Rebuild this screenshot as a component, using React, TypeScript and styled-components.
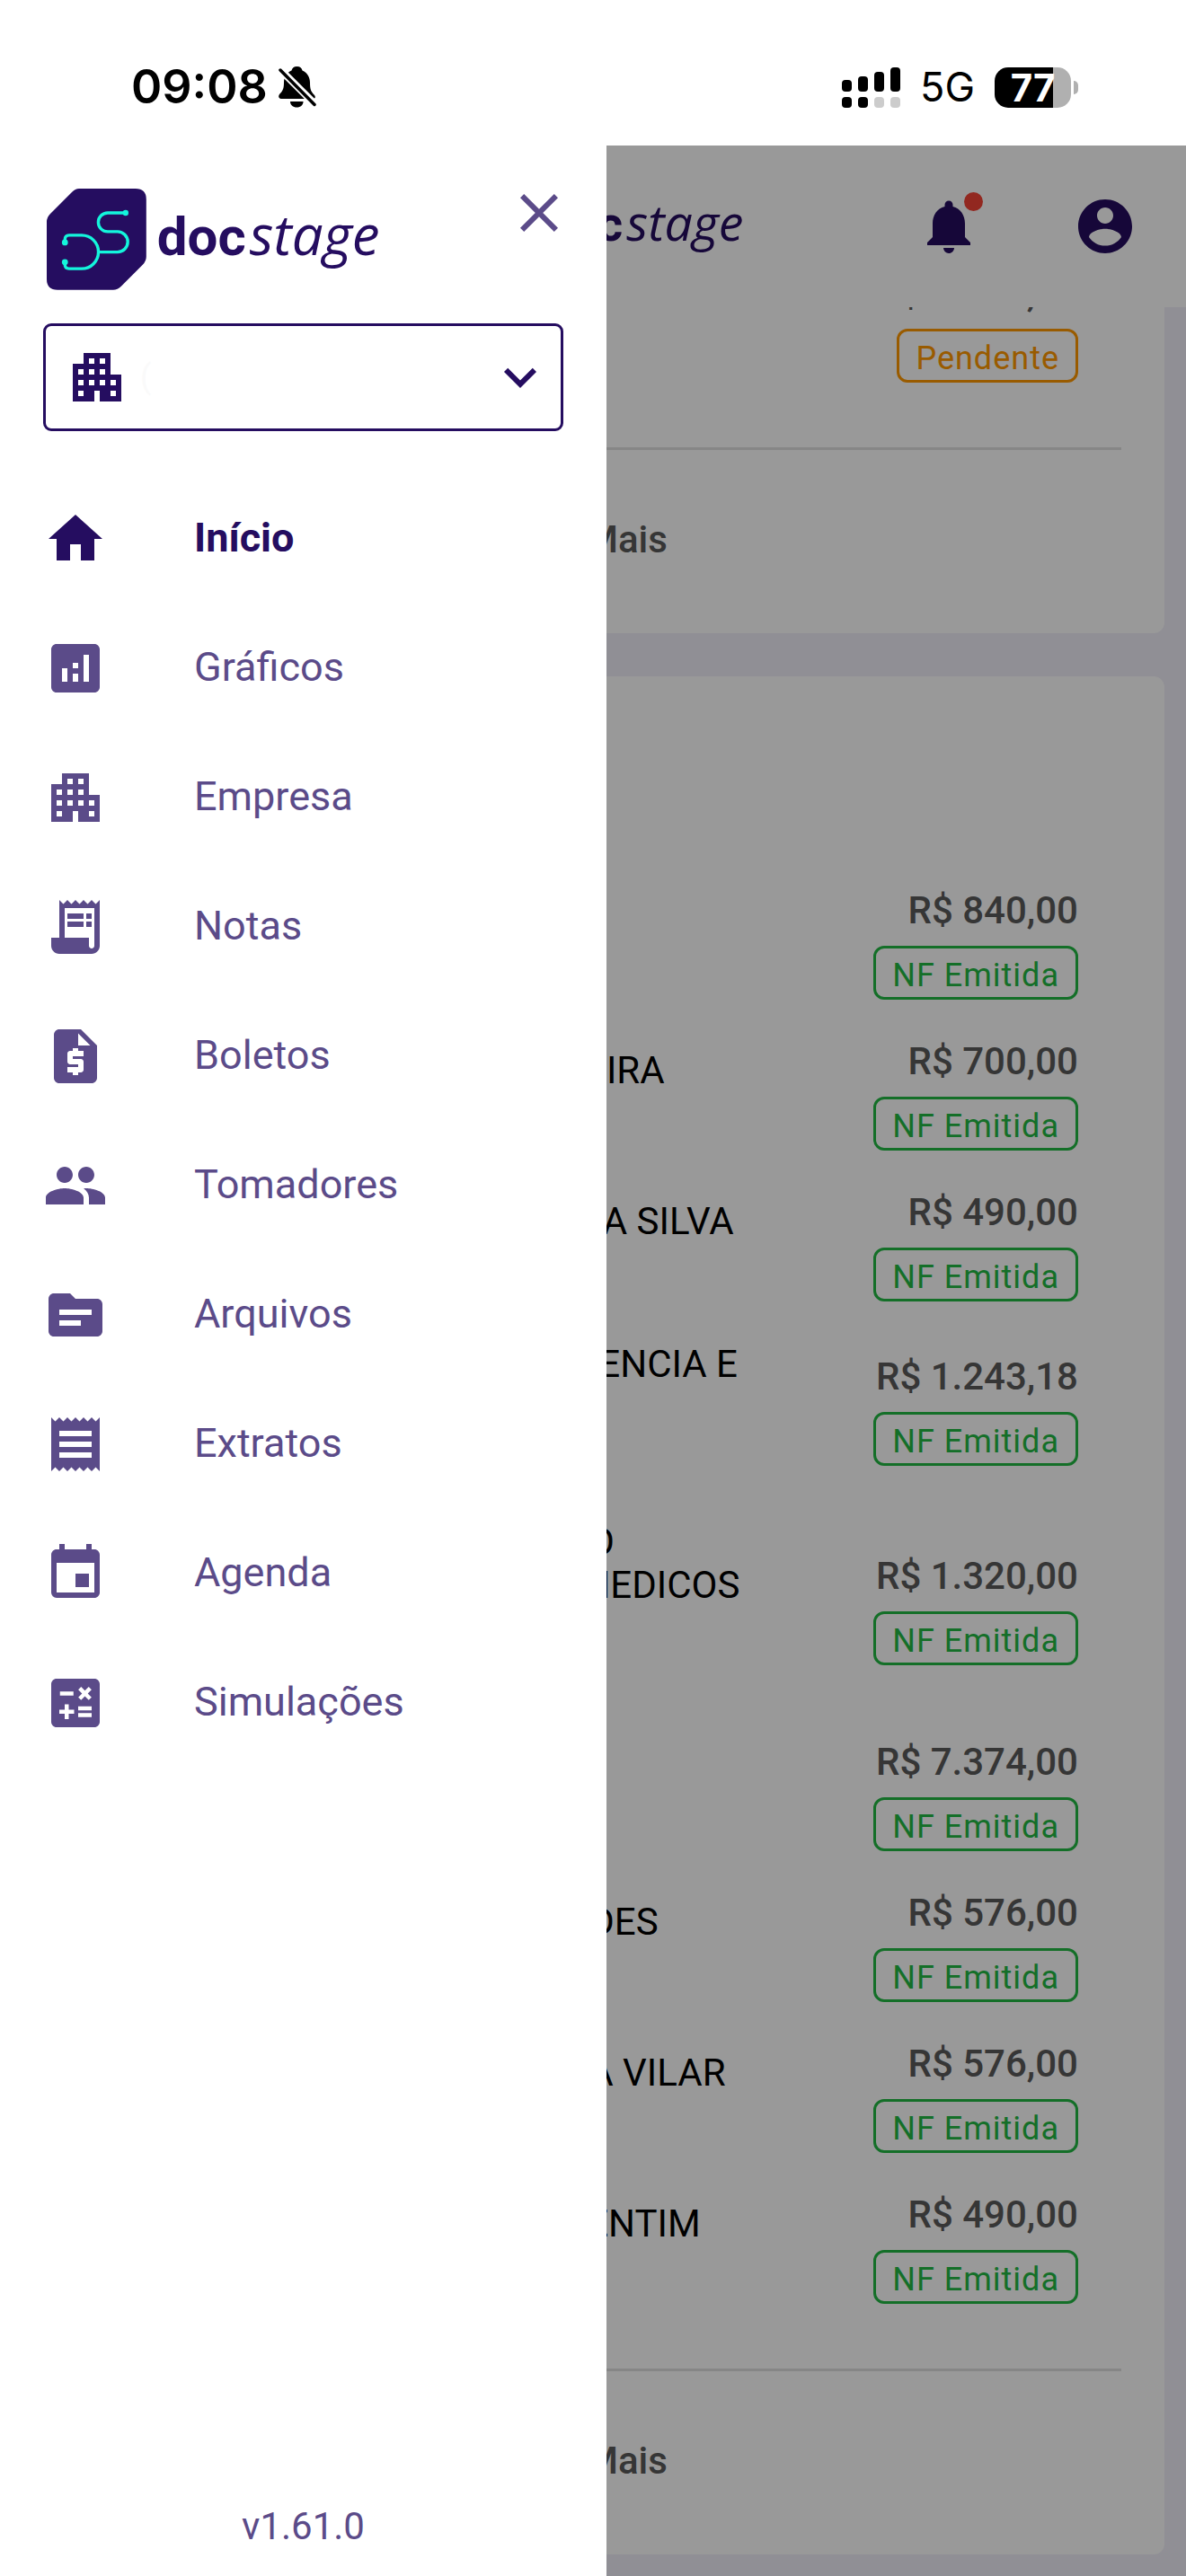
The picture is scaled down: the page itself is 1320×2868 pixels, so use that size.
import * as React from 'react';
import styled, { createGlobalStyle } from 'styled-components';
import type { IconType } from 'react-icons';
import {
    MdAnalytics,
    MdApartment,
    MdCalculate,
    MdClose,
    MdEvent,
    MdExpandMore,
    MdHome,
    MdNotifications,
    MdPeople,
    MdReceipt,
    MdReceiptLong,
    MdRequestQuote,
    MdTopic,
} from 'react-icons/md';

type Status = 'issued' | 'pending';

interface Invoice {
    date: string;
    number: string;
    name: string[];
    price: string;
    status: Status;
}

interface MenuEntry {
    label: string;
    icon: IconType;
    active?: boolean;
}

const colors = {
    primary: '#250d60',
    muted: '#5b4b89',
    text: '#5b5b5b',
    issued: '#22b944',
    pending: '#ff9800',
    divider: '#dfdfdf',
    page: '#f0eef8',
    alert: '#f44336',
};

const statusLabel: Record<Status, string> = {
    issued: 'NF Emitida',
    pending: 'Pendente',
};

const pendingInvoices: Invoice[] = [
    { date: '12/05', number: 'NF 110', name: ['PAULA'], price: 'R$ 1.380,17', status: 'pending' },
];

const invoices: Invoice[] = [
    { date: '10/05', number: 'NF 109', name: ['CARLA'], price: 'R$ 840,00', status: 'issued' },
    { date: '10/05', number: 'NF 108', name: ['LIA FERREIRA'], price: 'R$ 700,00', status: 'issued' },
    { date: '09/05', number: 'NF 107', name: ['CAMILA DA SILVA'], price: 'R$ 490,00', status: 'issued' },
    { date: '09/05', number: 'NF 106', name: ['GRUPO CIENCIA E', 'SAUDE'], price: 'R$ 1.243,18', status: 'issued' },
    { date: '08/05', number: 'NF 105', name: ['GRUPO DO', 'EIXO DE MEDICOS', 'LTDA'], price: 'R$ 1.320,00', status: 'issued' },
    { date: '08/05', number: 'NF 104', name: ['CLINICA'], price: 'R$ 7.374,00', status: 'issued' },
    { date: '07/05', number: 'NF 103', name: ['LEO MENDES'], price: 'R$ 576,00', status: 'issued' },
    { date: '07/05', number: 'NF 102', name: ['ANA ROSA VILAR'], price: 'R$ 576,00', status: 'issued' },
    { date: '06/05', number: 'NF 101', name: ['RITA VALENTIM'], price: 'R$ 490,00', status: 'issued' },
];

const menu: MenuEntry[] = [
    { label: 'Início', icon: MdHome, active: true },
    { label: 'Gráficos', icon: MdAnalytics },
    { label: 'Empresa', icon: MdApartment },
    { label: 'Notas', icon: MdReceiptLong },
    { label: 'Boletos', icon: MdRequestQuote },
    { label: 'Tomadores', icon: MdPeople },
    { label: 'Arquivos', icon: MdTopic },
    { label: 'Extratos', icon: MdReceipt },
    { label: 'Agenda', icon: MdEvent },
    { label: 'Simulações', icon: MdCalculate },
];

const GlobalStyle = createGlobalStyle`
    * {
        box-sizing: border-box;
    }

    body {
        margin: 0;
        background-color: white;
        font-family: Roboto, sans-serif;
    }
`;

const Screen = styled.div`
    display: flex;
    flex-direction: column;
    min-height: 100vh;
`;

const StatusBar = styled.div`
    display: flex;
    align-items: center;
    justify-content: space-between;
    height: 162px;
    padding: 32px 120px 0 146px;
    color: black;
    font-family: Inter, sans-serif;
`;

const StatusGroup = styled.div`
    display: flex;
    align-items: center;
    gap: ${({ $gap }: { $gap: number }) => $gap}px;
`;

const Clock = styled.span`
    font-size: 52px;
    font-weight: 600;
    line-height: 60px;
`;

const Network = styled.span`
    font-size: 45px;
    font-weight: 400;
    line-height: 60px;
`;

const Battery = styled.div`
    display: flex;
    align-items: center;
    gap: 3px;

    &::after {
        content: '';
        width: 5px;
        height: 15px;
        border-radius: 0 8px 8px 0;
        background-color: #b0b0b0;
    }
`;

const BatteryLevel = styled.span`
    width: 85px;
    height: 45px;
    border-radius: 15px;
    background: linear-gradient(to right, black 77%, #b0b0b0 77%);
    color: white;
    font-size: 42px;
    font-weight: 700;
    line-height: 45px;
    text-align: center;
`;

const Body = styled.div`
    position: relative;
    flex: 1;
    overflow: hidden;
`;

const Page = styled.div`
    min-height: 100%;
    background-color: ${colors.page};
`;

const AppBar = styled.header`
    position: relative;
    z-index: 1;
    display: grid;
    grid-template-columns: 1fr auto 1fr;
    align-items: center;
    height: 180px;
    padding: 0 54px;
    background-color: white;
`;

const Actions = styled.div`
    grid-column: 3;
    display: flex;
    justify-content: flex-end;
    gap: 102px;
`;

const IconButton = styled.button`
    position: relative;
    display: flex;
    padding: 0;
    border: none;
    background-color: transparent;
    color: ${({ $muted }: { $muted?: boolean }) => ($muted ? colors.muted : colors.primary)};
    font-size: 72px;
    cursor: pointer;
`;

const AlertDot = styled.span`
    position: absolute;
    top: -2px;
    right: -2px;
    width: 21px;
    height: 21px;
    border-radius: 50%;
    background-color: ${colors.alert};
`;

const Brand = styled.div`
    grid-column: 2;
    display: flex;
    align-items: center;
    gap: 12px;
    color: ${colors.primary};
    font-size: ${({ $size }: { $size: number }) => $size}px;
    line-height: 1;

    svg {
        height: 1.88em;
    }
`;

const BrandText = styled.div`
    display: flex;
    align-items: baseline;
    gap: 4px;
    padding-bottom: 8px;
`;

const BrandDoc = styled.strong`
    font-weight: 700;
`;

const BrandStage = styled.em`
    font-family: 'Open Sans', sans-serif;
    font-size: 1.03em;
    font-weight: 400;
`;

// The list is scrolled a little way under the app bar.
const Feed = styled.main`
    display: flex;
    flex-direction: column;
    gap: 48px;
    margin-top: -108px;
    padding: 0 24px 24px;
`;

const Card = styled.section`
    padding: 48px 48px 0;
    border-radius: 12px;
    background-color: white;
`;

const CardTitle = styled.h2`
    height: 168px;
    margin: 0;
    color: ${colors.text};
    font-size: 48px;
    font-weight: 500;
    line-height: 60px;
`;

const List = styled.ul`
    margin: 0;
    padding: 0 0 48px;
    border-bottom: 3px solid ${colors.divider};
    list-style: none;
`;

const Row = styled.li`
    display: grid;
    grid-template-columns: 1fr 400px 368px;
    align-items: center;
    min-height: 168px;
    color: black;
    font-size: 42px;
    line-height: 48px;
`;

const Customer = styled.div`
    display: flex;
    flex-direction: column;
    gap: 6px;
    padding: 22px 0 26px;
    white-space: nowrap;
`;

const Name = styled.span`
    display: block;
`;

const Amount = styled.div`
    display: flex;
    flex-direction: column;
    align-items: flex-end;
    gap: 18px;
    padding-right: 48px;
    color: ${colors.text};
    font-weight: 500;
    line-height: 42px;
`;

const Chip = styled.span`
    height: 60px;
    padding: 0 18px;
    border: 3px solid;
    border-radius: 12px;
    color: ${({ $status }: { $status: Status }) => colors[$status]};
    font-size: 36px;
    font-weight: 400;
    letter-spacing: 1px;
    line-height: 60px;
`;

const MoreButton = styled.button`
    display: block;
    width: 100%;
    height: 204px;
    padding: 0 0 6px;
    border: none;
    background-color: transparent;
    color: ${colors.text};
    font-family: inherit;
    font-size: 42px;
    font-weight: 500;
    cursor: pointer;
`;

const Scrim = styled.div`
    position: absolute;
    inset: 0;
    z-index: 2;
    background-color: rgba(0, 0, 0, 0.4);
`;

const Drawer = styled.aside`
    position: absolute;
    inset: 0 auto 0 0;
    z-index: 3;
    display: flex;
    flex-direction: column;
    width: 675px;
    max-width: 90%;
    padding: 39px 48px 22px;
    background-color: white;
`;

const DrawerHeader = styled.div`
    display: flex;
    align-items: flex-start;
    justify-content: space-between;
    height: 159px;
    padding: 9px 0 0 4px;
    margin-right: -9px;

    ${IconButton} {
        margin-top: -9px;
    }
`;

const CompanyPicker = styled.label`
    display: flex;
    align-items: center;
    height: 120px;
    padding: 0 9px 0 21px;
    border: 3px solid ${colors.primary};
    border-radius: 9px;
    color: ${colors.primary};
    font-size: 72px;
`;

const CompanySelect = styled.select`
    flex: 1;
    min-width: 0;
    height: 100%;
    padding: 0 12px;
    border: none;
    outline: 0;
    appearance: none;
    background-color: transparent;
    color: #fafafa;
    font-family: inherit;
    font-size: 36px;
`;

const Menu = styled.nav`
    display: flex;
    flex-direction: column;
    padding-top: 48px;
`;

const MenuLink = styled.a`
    display: flex;
    align-items: center;
    gap: 96px;
    height: 144px;
    color: ${({ $active }: { $active?: boolean }) => ($active ? colors.primary : colors.muted)};
    font-size: 45px;
    font-weight: ${({ $active }) => ($active ? 700 : 400)};
    text-decoration: none;

    svg {
        font-size: 72px;
    }
`;

const MenuLabel = styled.span`
    padding-bottom: 3px;
`;

const Version = styled.footer`
    margin-top: auto;
    color: ${colors.muted};
    font-size: 42px;
    line-height: 66px;
    text-align: center;
`;

function MutedIcon() {
    return (
        <svg width={42} height={46} viewBox="0 0 42 46">
            <path d="M20.5 0C24 0 26 2 26.5 4.5C32 7 35 12 35 18C35 25 36 28 40 32C41.5 34 41 36 38 36H3C0 36 -0.5 33 1 31C5 27 6 24 6 18C6 12 9 7 14.5 4.5C15 2 17 0 20.5 0Z" />
            <path d="M13 39h14.5c0 4-3 6.5-7.2 6.5s-7.3-2.5-7.3-6.5z" />
            <path d="M-3 -1.5L43 44.5" stroke="white" strokeWidth={8} />
            <path d="M2 4L40 42.5" stroke="black" strokeWidth={3.5} strokeLinecap="round" />
        </svg>
    );
}

function SignalIcon() {
    return (
        <svg width={65} height={45} viewBox="0 0 65 45">
            <rect x="0" y="14" width="11" height="13" rx="4" />
            <rect x="18" y="10" width="11" height="17" rx="4" />
            <rect x="36" y="5" width="11" height="22" rx="4" />
            <rect x="54" y="0" width="11" height="27" rx="4" />
            <rect x="0" y="33" width="11" height="12" rx="4" />
            <rect x="18" y="33" width="11" height="12" rx="4" />
            <rect x="36" y="33" width="11" height="12" rx="4" fill="#ccc" />
            <rect x="54" y="33" width="11" height="12" rx="4" fill="#ccc" />
        </svg>
    );
}

function AccountIcon() {
    return (
        <svg width="1em" height="1em" viewBox="0 0 24 24" fill="currentColor">
            <path d="M12 2C6.48 2 2 6.48 2 12s4.48 10 10 10 10-4.48 10-10S17.52 2 12 2zm0 3c1.66 0 3 1.34 3 3s-1.34 3-3 3-3-1.34-3-3 1.34-3 3-3zm0 14.2c-2.5 0-4.71-1.28-6-3.22.03-1.99 4-3.08 6-3.08 1.99 0 5.97 1.09 6 3.08-1.29 1.94-3.5 3.22-6 3.22z" />
        </svg>
    );
}

function BrandMark() {
    return (
        <svg viewBox="0 0 111 113">
            <path
                fill={colors.primary}
                d="M36 0H99Q111 0 111 12V76Q111 81 107 85L83 109Q79 113 74 113H12Q0 113 0 101V37Q0 32 4 28L28 4Q32 0 36 0Z"
            />
            <g fill="none" stroke="#14f5dc" strokeWidth={3.4}>
                <path d="M88 27H68a10.5 10.5 0 0 0 0 21H79a11.3 11.3 0 0 1 0 22.7H58" />
                <path d="M20.3 60V57Q20.3 52 25 52H39a18.6 18.6 0 0 1 0 37.3H25Q20.3 89.3 20.3 85V82" />
            </g>
            <g fill="#14f5dc">
                <circle cx="88" cy="27" r="3.2" />
                <circle cx="20.3" cy="60" r="3.4" />
                <circle cx="20.3" cy="82" r="3.4" />
            </g>
        </svg>
    );
}

function Logo({ size }: { size: number }) {
    return (
        <Brand $size={size}>
            <BrandMark />
            <BrandText>
                <BrandDoc>doc</BrandDoc>
                <BrandStage>stage</BrandStage>
            </BrandText>
        </Brand>
    );
}

function InvoiceList({ items }: { items: Invoice[] }) {
    return (
        <List>
            {items.map(item => (
                <Row key={item.number}>
                    <span>{item.date}</span>
                    <Customer>
                        <div>
                            {item.name.map(line => (
                                <Name key={line}>{line}</Name>
                            ))}
                        </div>
                        <span>{item.number}</span>
                    </Customer>
                    <Amount>
                        {item.price}
                        <Chip $status={item.status}>{statusLabel[item.status]}</Chip>
                    </Amount>
                </Row>
            ))}
        </List>
    );
}

const App: React.FC = () => {
    return (
        <Screen>
            <GlobalStyle />
            <StatusBar>
                <StatusGroup $gap={12}>
                    <Clock>09:08</Clock>
                    <MutedIcon />
                </StatusGroup>
                <StatusGroup $gap={22}>
                    <SignalIcon />
                    <Network>5G</Network>
                    <Battery>
                        <BatteryLevel>77</BatteryLevel>
                    </Battery>
                </StatusGroup>
            </StatusBar>
            <Body>
                <Page>
                    <AppBar>
                        <Logo size={54} />
                        <Actions>
                            <IconButton aria-label="Notificações">
                                <MdNotifications />
                                <AlertDot />
                            </IconButton>
                            <IconButton aria-label="Conta">
                                <AccountIcon />
                            </IconButton>
                        </Actions>
                    </AppBar>
                    <Feed>
                        <Card>
                            <InvoiceList items={pendingInvoices} />
                            <MoreButton>Ver Mais</MoreButton>
                        </Card>
                        <Card>
                            <CardTitle>Notas</CardTitle>
                            <InvoiceList items={invoices} />
                            <MoreButton>Ver Mais</MoreButton>
                        </Card>
                    </Feed>
                </Page>
                <Scrim />
                <Drawer>
                    <DrawerHeader>
                        <Logo size={60} />
                        <IconButton $muted aria-label="Fechar">
                            <MdClose />
                        </IconButton>
                    </DrawerHeader>
                    <CompanyPicker>
                        <MdApartment />
                        <CompanySelect aria-label="Empresa">
                            <option>(</option>
                        </CompanySelect>
                        <MdExpandMore />
                    </CompanyPicker>
                    <Menu>
                        {menu.map(({ label, icon: Icon, active }) => (
                            <MenuLink key={label} href="#" $active={active}>
                                <Icon />
                                <MenuLabel>{label}</MenuLabel>
                            </MenuLink>
                        ))}
                    </Menu>
                    <Version>v1.61.0</Version>
                </Drawer>
            </Body>
        </Screen>
    );
};

export default App;
